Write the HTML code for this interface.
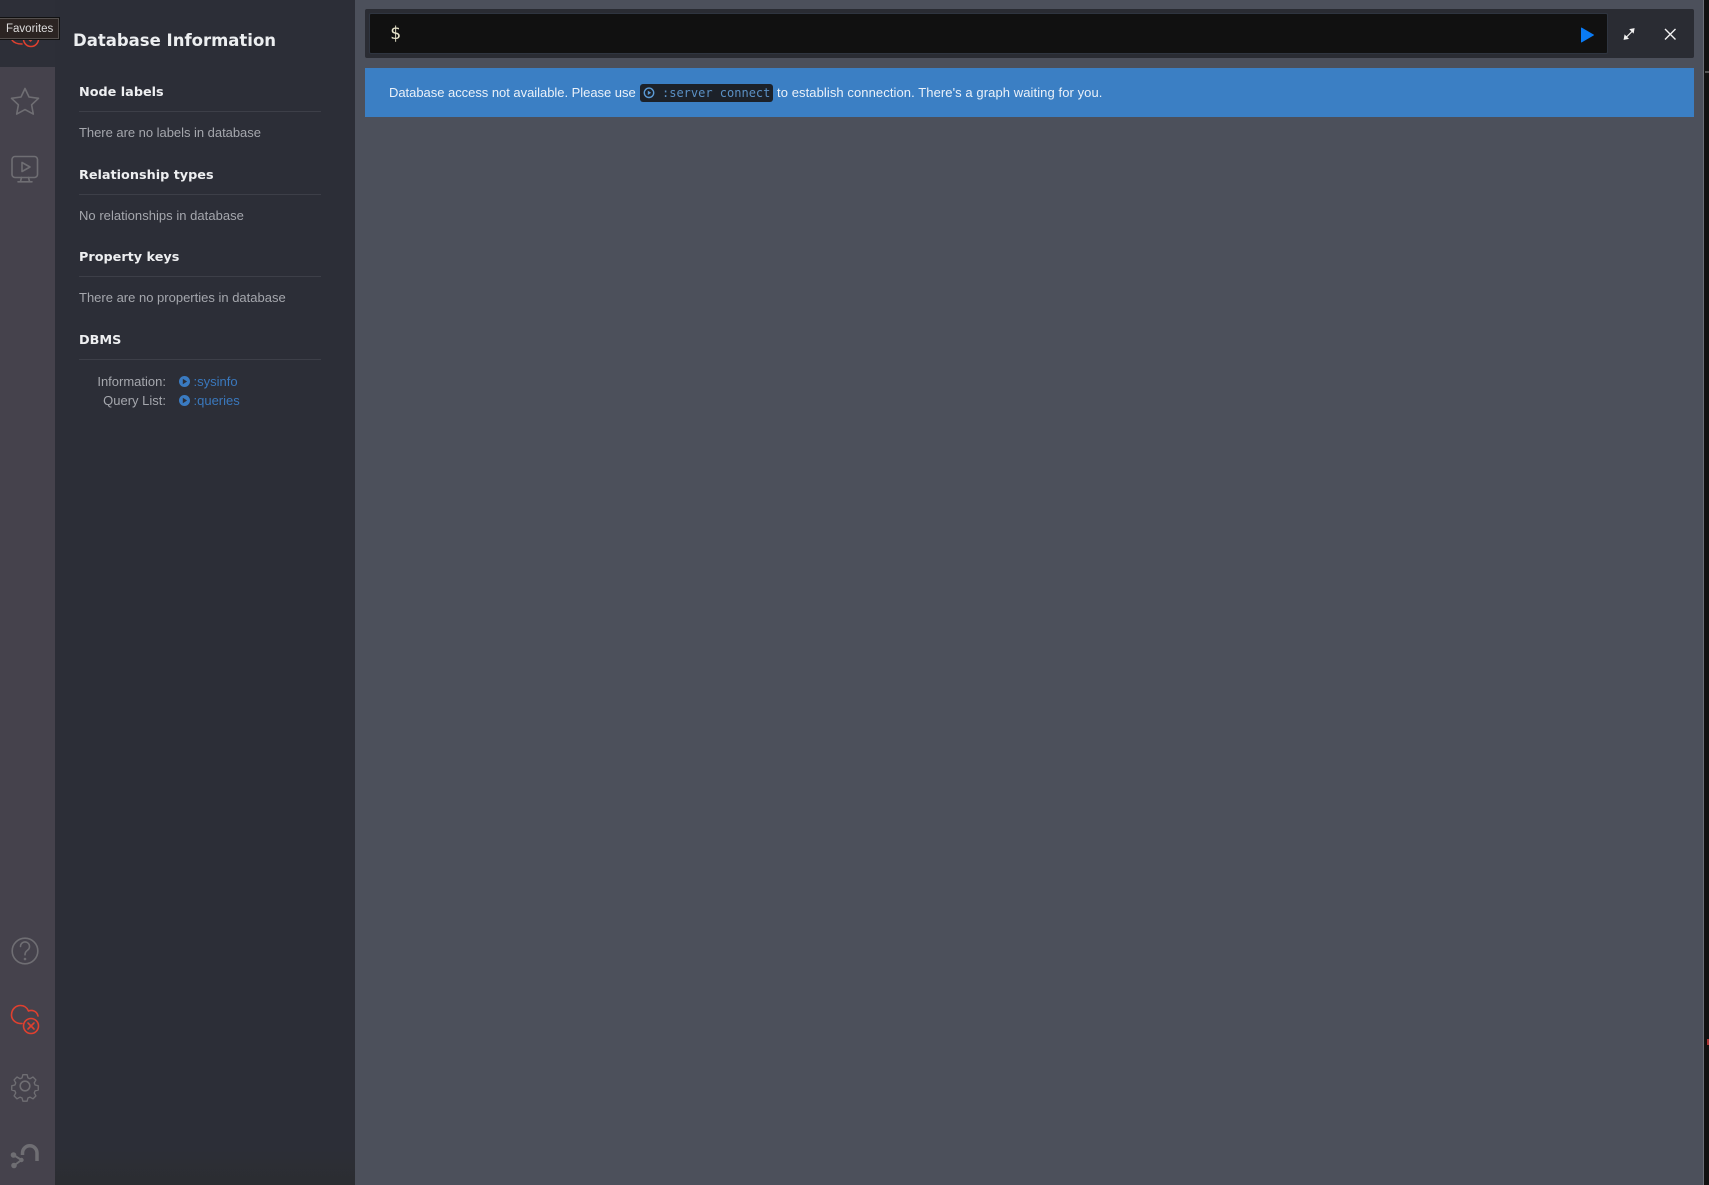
<!DOCTYPE html>
<html><head><meta charset="utf-8"><style>
*{box-sizing:border-box}
html,body{margin:0;padding:0;width:1709px;height:1185px;overflow:hidden;background:#4c505b;font-family:"Liberation Sans",sans-serif}
.a{position:absolute}
.t{position:absolute;white-space:nowrap;line-height:20px}
.h{position:absolute;left:79px;font:bold 12.8px/20px "DejaVu Sans","Liberation Sans",sans-serif;color:#eeeff1;white-space:nowrap;letter-spacing:0}
.l{position:absolute;left:79px;width:242px;height:1px;background:#3d3f48}
.p{position:absolute;left:79px;font-size:13px;line-height:20px;color:#a5a7ad;white-space:nowrap}
</style></head><body>
<div class="a" style="left:0;top:0;width:55px;height:1185px;background:#45424c"></div>
<div class="a" style="left:0;top:0;width:55px;height:67px;background:#2d2f38"></div>
<div class="a" style="left:55px;top:0;width:300px;height:1185px;background:linear-gradient(#2c2e37 0,#2c2e37 1150px,#2b2d31 1185px)"></div>
<div class="a" style="left:1703px;top:0;width:1px;height:1185px;background:#6a6e77"></div>
<div class="a" style="left:1704px;top:0;width:5px;height:1185px;background:#111"></div>
<div class="a" style="left:1705px;top:71px;width:4px;height:2px;background:#555"></div>
<div class="a" style="left:1707px;top:1039px;width:2px;height:6px;background:#a33"></div>

<svg class="a" style="left:0;top:0" width="55" height="1185" fill="none" stroke-linecap="round" stroke-linejoin="round">
<g stroke="#e0402f" stroke-width="1.5"><path d="M12 40c2 3 6 4 10 4"/><circle cx="31" cy="39" r="7.500"/><path d="M27.500 38l3 3 4-5"/></g>
<g stroke="#6f6e73" stroke-width="1.600">
<path d="M25 88.500l4 8.500 9.500 1.300-6.900 6.500 1.700 9.300-8.300-4.500-8.300 4.500 1.700-9.300-6.900-6.500 9.500-1.300z"/>
<rect x="12" y="156.500" width="25.500" height="21" rx="3"/><path d="M22 162.500v9l8-4.500zM21.500 177.500l-1 4M28.500 177.500l1 4M18 181.800h14"/>
<circle cx="25" cy="951" r="12.800"/><path d="M20.500 946.500a4.500 4.500 0 1 1 7.500 3.300c-1.800 1.500-3 2.200-3 5"/><circle cx="25" cy="959" r=".5"/>
<circle cx="25" cy="1086" r="4.800"/>
<path transform="translate(25 1086) scale(.84) translate(-25 -1087)" d="M22.500 1073.500h5l1 3.800 2.500 1 3.500-2 3.500 3.500-2 3.500 1 2.500 3.800 1v5l-3.800 1-1 2.500 2 3.500-3.500 3.500-3.500-2-2.500 1-1 3.800h-5l-1-3.800-2.500-1-3.500 2-3.500-3.500 2-3.500-1-2.500-3.800-1v-5l3.800-1 1-2.500-2-3.500 3.500-3.500 3.500 2 2.500-1z"/>
</g>
<g stroke="#e0402f" stroke-width="1.600">
<path d="M22 1023.500C15 1024 11.500 1019 11.500 1015C11.500 1009 16 1005.500 20.500 1005.500C24 1005.500 27 1007.500 28.500 1011C32 1009.500 37 1011 38 1016"/><circle cx="31" cy="1026" r="7.500"/><path d="M28 1023l6 6M34 1023l-6 6"/>
</g>
<g stroke="#6f6e73" fill="#6f6e73">
<path d="M22.500 1155v-2a7.250 7.250 0 0 1 14.500 0v8" fill="none" stroke-width="3.500" stroke-linecap="butt"/>
<circle cx="13.500" cy="1155" r="2.800" stroke="none"/><circle cx="14" cy="1165.500" r="2.800" stroke="none"/><circle cx="21.500" cy="1160" r="2.200" stroke="none"/>
<path d="M13.500 1155l8 5-7.500 5.500" fill="none" stroke-width="2"/>
</g>
</svg>

<div class="a" style="left:-1px;top:18px;width:60px;height:21px;background:#2b2422;border:1px solid #55504e;box-shadow:0 0 0 1px #111;color:#dcdcdc;font-size:11.500px;line-height:20px;padding-left:6px">Favorites</div>

<div class="t" style="left:73px;top:31px;font:bold 16.500px/20px 'DejaVu Sans','Liberation Sans',sans-serif;color:#eceef0;letter-spacing:0">Database Information</div>

<div class="h" style="top:83px">Node labels</div><div class="l" style="top:111px"></div>
<div class="p" style="top:123px;letter-spacing:-.03px">There are no labels in database</div>
<div class="h" style="top:166px">Relationship types</div><div class="l" style="top:194px"></div>
<div class="p" style="top:206px;letter-spacing:.03px">No relationships in database</div>
<div class="h" style="top:248px">Property keys</div><div class="l" style="top:276px"></div>
<div class="p" style="top:288px">There are no properties in database</div>
<div class="h" style="top:331px">DBMS</div><div class="l" style="top:359px"></div>
<div class="t" style="left:60px;width:106px;text-align:right;top:372px;font-size:13px;color:#a5a7ad">Information:</div>
<div class="t" style="left:60px;width:106px;text-align:right;top:391px;font-size:13px;color:#a5a7ad">Query List:</div>
<svg class="a" style="left:179px;top:375px" width="12" height="31"><circle cx="5.500" cy="6.500" r="5.500" fill="#3a7bc2"/><path d="M3.800 3.800v5.400l4.300-2.700z" fill="#2c2e37"/><circle cx="5.500" cy="25.500" r="5.500" fill="#3a7bc2"/><path d="M3.800 22.800v5.400l4.300-2.700z" fill="#2c2e37"/></svg>
<div class="t" style="left:193.500px;top:372px;font-size:13px;color:#3a78bd">:sysinfo</div>
<div class="t" style="left:193.500px;top:391px;font-size:13px;color:#3a78bd">:queries</div>

<div class="a" style="left:365px;top:9px;width:1329px;height:49px;background:#2a2c33;border-radius:2px"></div>
<div class="a" style="left:369px;top:13px;width:1239px;height:41px;background:#111;border:1px solid #2f3540;border-radius:2px"></div>
<div class="t" style="left:390px;top:24px;font:18px/20px 'DejaVu Sans Mono','Liberation Mono',monospace;color:#e8e5cc">$</div>
<svg class="a" style="left:1549px;top:0" width="150" height="60">
<path d="M32.500 28v14l12-7z" fill="#0a7bf5" stroke="#0a7bf5" stroke-linejoin="round"/>
<g stroke="#f2f2f2" fill="#f2f2f2"><path d="M77 37.500l7-7" stroke-width="1.200"/><path d="M85 28.800l-3.800.700 3.100 3.100zM75.200 39.200l3.800-.700-3.100-3.100z"/></g>
<path d="M116 29l10.500 10.500M126.500 29l-10.500 10.500" stroke="#f2f2f2" stroke-width="1.400" fill="none"/>
</svg>

<div class="a" style="left:365px;top:68px;width:1329px;height:49px;background:#3b7fc4"></div>
<div class="t" style="left:389px;top:83px;font-size:13px;color:#eaf1f9;letter-spacing:-.03px">Database access not available. Please use</div>
<div class="a" style="left:640px;top:84px;width:133px;height:18px;background:#1c2129;border-radius:3px"></div>
<svg class="a" style="left:643px;top:87px" width="13" height="13" fill="none"><circle cx="6" cy="5.800" r="4.700" stroke="#5b9ad5" stroke-width="1.400"/><path d="M4.800 3.600v4.400l3.300-2.200z" fill="#5b9ad5"/></svg>
<div class="t" style="left:662px;top:83px;font:12px/20px 'DejaVu Sans Mono','Liberation Mono',monospace;color:#5b90c4">:server connect</div>
<div class="t" style="left:777px;top:83px;font-size:13px;color:#eaf1f9;letter-spacing:.08px">to establish connection. There's a graph waiting for you.</div>
</body></html>
